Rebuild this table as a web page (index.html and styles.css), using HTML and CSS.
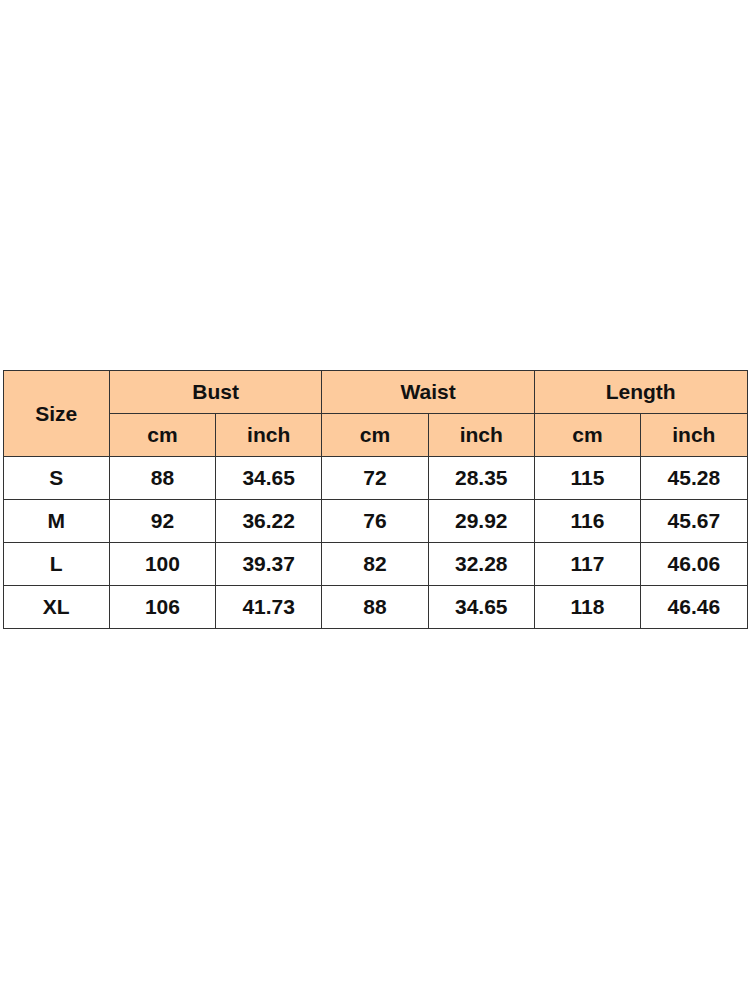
FILE: index.html
```html
<!DOCTYPE html>
<html>
<head>
<meta charset="utf-8">
<link rel="stylesheet" href="styles.css">
</head>
<body>
<div class="page">
  <table class="size-table">
    <colgroup>
      <col class="c"><col class="c"><col class="c"><col class="c"><col class="c"><col class="c"><col class="c">
    </colgroup>
    <thead>
      <tr>
        <th rowspan="2">Size</th>
        <th colspan="2">Bust</th>
        <th colspan="2">Waist</th>
        <th colspan="2">Length</th>
      </tr>
      <tr>
        <th>cm</th><th>inch</th><th>cm</th><th>inch</th><th>cm</th><th>inch</th>
      </tr>
    </thead>
    <tbody>
      <tr><td>S</td><td>88</td><td>34.65</td><td>72</td><td>28.35</td><td>115</td><td>45.28</td></tr>
      <tr><td>M</td><td>92</td><td>36.22</td><td>76</td><td>29.92</td><td>116</td><td>45.67</td></tr>
      <tr><td>L</td><td>100</td><td>39.37</td><td>82</td><td>32.28</td><td>117</td><td>46.06</td></tr>
      <tr><td>XL</td><td>106</td><td>41.73</td><td>88</td><td>34.65</td><td>118</td><td>46.46</td></tr>
    </tbody>
  </table>
</div>
</body>
</html>
```

FILE: styles.css
```css
html, body {
  margin: 0;
  padding: 0;
  background: #ffffff;
}
.page {
  width: 750px;
  height: 999px;
  display: flex;
  align-items: center;
  justify-content: center;
}
.size-table {
  width: 745px;
  border-collapse: collapse;
  table-layout: fixed;
  font-family: "Liberation Sans", Arial, sans-serif;
  font-weight: bold;
  font-size: 21px;
  color: #111;
}
.size-table th,
.size-table td {
  border: 1px solid #333;
  height: 42px;
  padding: 0;
  text-align: center;
  vertical-align: middle;
}
.size-table th {
  background: #fdcb9d;
  font-weight: bold;
}
.size-table td {
  background: #ffffff;
}
```
